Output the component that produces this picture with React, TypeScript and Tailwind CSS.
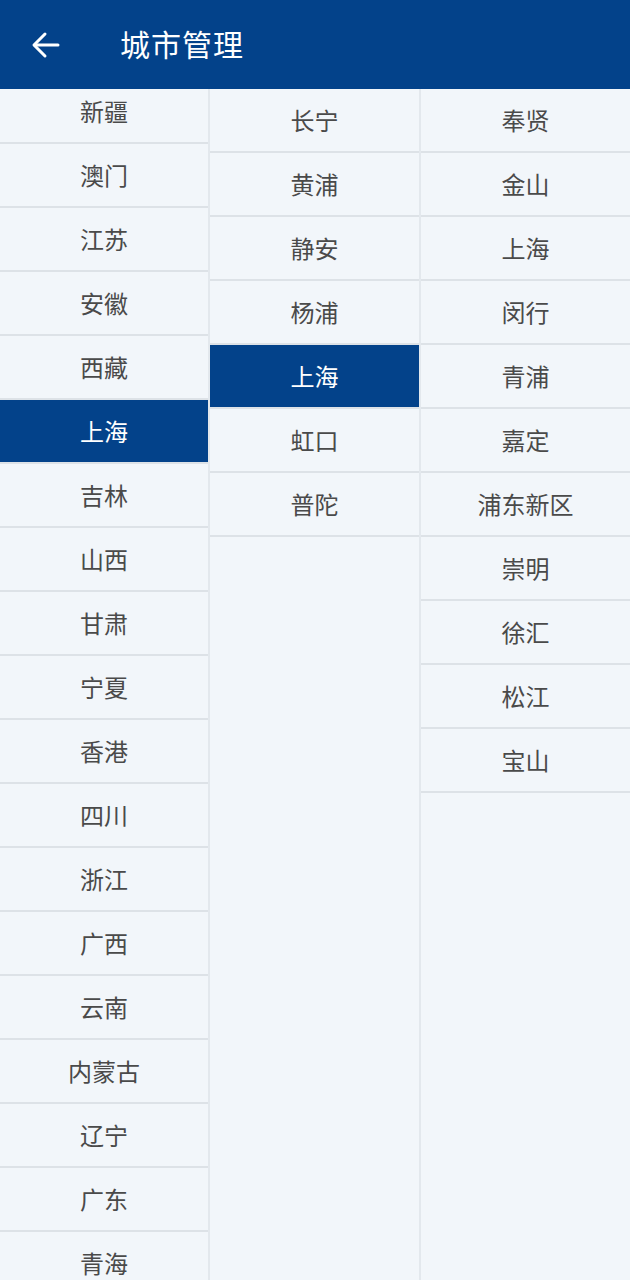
import React from "react";

const provinces = ["新疆","澳门","江苏","安徽","西藏","上海","吉林","山西","甘肃","宁夏","香港","四川","浙江","广西","云南","内蒙古","辽宁","广东","青海"];
const cities = ["长宁","黄浦","静安","杨浦","上海","虹口","普陀"];
const districts = ["奉贤","金山","上海","闵行","青浦","嘉定","浦东新区","崇明","徐汇","松江","宝山"];

function Row({ label, active }: { label: string; active?: boolean }) {
  return (
    <div
      className={
        "h-[64px] shrink-0 flex items-center justify-center border-b-2 border-[#dde2e7] text-[24px] leading-none " +
        (active ? "bg-[#03428a] text-white" : "text-[#4a4a4a]")
      }
    >
      {label}
    </div>
  );
}

export default function App() {
  return (
    <div
      className="w-[630px] h-[1280px] flex flex-col bg-[#f2f6fa] overflow-hidden"
      style={{ fontFamily: '"Noto Sans CJK SC", "Noto Sans", sans-serif' }}
    >
      <div className="h-[89px] shrink-0 bg-[#03428a] flex items-center text-white">
        <div className="w-[120px] pl-[31px] flex items-center">
          <svg width="30" height="30" viewBox="0 0 30 30" fill="none" stroke="white" strokeWidth="3" strokeLinecap="round" strokeLinejoin="round">
            <path d="M27 15H4" />
            <path d="M14 4L3 15l11 11" />
          </svg>
        </div>
        <div className="text-[30px] leading-none tracking-[1px] pb-[4px]">城市管理</div>
      </div>
      <div className="flex-1 flex min-h-0">
        <div className="w-[210px] border-r-2 border-[#e3e8ed] overflow-hidden flex flex-col">
          <div className="-mt-[9px] flex flex-col">
            {provinces.map((p) => (
              <Row key={p} label={p} active={p === "上海"} />
            ))}
          </div>
        </div>
        <div className="w-[211px] border-r-2 border-[#e3e8ed] flex flex-col">
          {cities.map((c) => (
            <Row key={c} label={c} active={c === "上海"} />
          ))}
        </div>
        <div className="flex-1 flex flex-col">
          {districts.map((d) => (
            <Row key={d} label={d} />
          ))}
        </div>
      </div>
    </div>
  );
}
